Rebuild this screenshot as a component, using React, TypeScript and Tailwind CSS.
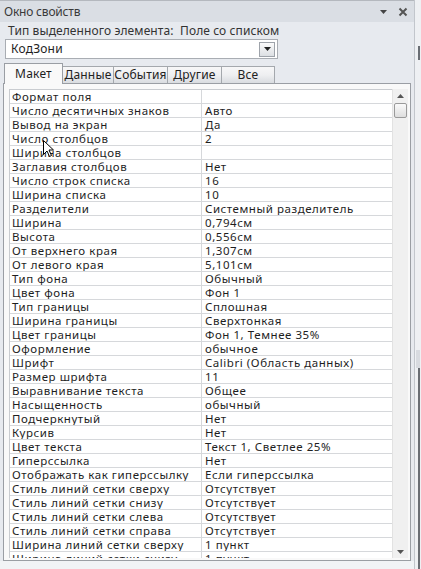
import React from 'react';

const rows: [string, string][] = [
  ['Формат поля', ''],
  ['Число десятичных знаков', 'Авто'],
  ['Вывод на экран', 'Да'],
  ['Число столбцов', '2'],
  ['Ширина столбцов', ''],
  ['Заглавия столбцов', 'Нет'],
  ['Число строк списка', '16'],
  ['Ширина списка', '10'],
  ['Разделители', 'Системный разделитель'],
  ['Ширина', '0,794см'],
  ['Высота', '0,556см'],
  ['От верхнего края', '1,307см'],
  ['От левого края', '5,101см'],
  ['Тип фона', 'Обычный'],
  ['Цвет фона', 'Фон 1'],
  ['Тип границы', 'Сплошная'],
  ['Ширина границы', 'Сверхтонкая'],
  ['Цвет границы', 'Фон 1, Темнее 35%'],
  ['Оформление', 'обычное'],
  ['Шрифт', 'Calibri (Область данных)'],
  ['Размер шрифта', '11'],
  ['Выравнивание текста', 'Общее'],
  ['Насыщенность', 'обычный'],
  ['Подчеркнутый', 'Нет'],
  ['Курсив', 'Нет'],
  ['Цвет текста', 'Текст 1, Светлее 25%'],
  ['Гиперссылка', 'Нет'],
  ['Отображать как гиперссылку', 'Если гиперссылка'],
  ['Стиль линий сетки сверху', 'Отсутствует'],
  ['Стиль линий сетки снизу', 'Отсутствует'],
  ['Стиль линий сетки слева', 'Отсутствует'],
  ['Стиль линий сетки справа', 'Отсутствует'],
  ['Ширина линий сетки сверху', '1 пункт'],
  ['Ширина линий сетки снизу', '1 пункт'],
];

const tabs = ['Макет', 'Данные', 'События', 'Другие', 'Все'];
const tabWidths = ['w-[59px]', 'w-[51px]', 'w-[54px]', 'w-[54px]', 'w-[53px]'];

export default function App() {
  return (
    <div className="w-[421px] h-[569px] flex bg-[#f1f3f6] overflow-hidden text-[#1e1e1e] font-['Noto_Sans',sans-serif] relative">
      <div className="w-[414px] h-[561px] flex flex-col bg-[#e7eaef] border-t border-[#b4b8be]">
        {/* title bar */}
        <div className="h-[21px] bg-[#dadee4] flex items-center justify-between pl-[4px] pr-[6px]">
          <span className="text-[12px] text-[#3a3a3a] tracking-[-0.2px]">Окно свойств</span>
          <div className="flex items-center gap-[10px]">
            <svg width="9" height="6" viewBox="0 0 9 6"><path d="M1 1h7L4.5 5z" fill="#444" /></svg>
            <svg width="10" height="10" viewBox="0 0 10 10"><path d="M1.5 1.5l7 7M8.5 1.5l-7 7" stroke="#555" strokeWidth="2" /></svg>
          </div>
        </div>

        <div className="pl-[8px] pt-[1px] h-[16px] text-[12px] leading-[16px] tracking-[0.1px] text-[#333]">
          Тип выделенного элемента:&nbsp;&nbsp;Поле со списком
        </div>

        {/* combo box */}
        <div className="ml-[5px] mt-[1px] w-[273px] h-[20px] bg-white border border-[#a9adb3] flex items-center justify-between pl-[5px] pr-[2px]">
          <span className="text-[12px] tracking-[0.2px]">КодЗони</span>
          <div className="w-[16px] h-[15px] border border-[#9ea3aa] bg-gradient-to-b from-[#fbfbfb] to-[#dcdfe3] flex items-center justify-center">
            <svg width="7" height="4" viewBox="0 0 7 4"><path d="M0 0h7L3.5 4z" fill="#222" /></svg>
          </div>
        </div>

        {/* tabs */}
        <div className="flex items-end ml-[4px] mt-[4px] h-[20px]">
          {tabs.map((t, i) =>
            i === 0 ? (
              <div key={t} className={`${tabWidths[i]} h-[21px] -mb-px relative z-10 bg-[#f9f9f9] border border-b-0 border-[#9a9ea4] flex items-start justify-center pt-[1px] text-[12px] tracking-[0.2px]`}>
                {t}
              </div>
            ) : (
              <div key={t} className={`${tabWidths[i]} h-[17px] bg-gradient-to-b from-[#f7f7f8] via-[#eeeff1] to-[#d9dce0] border border-l-0 border-b-0 border-[#a4a8ad] flex items-center justify-center text-[12px] tracking-[0.2px] text-[#222]`}>
                {t}
              </div>
            )
          )}
        </div>

        {/* panel */}
        <div className="ml-[3px] w-[408px] flex-1 bg-[#f9f9f9] border border-[#9a9ea4] pl-[5px] pt-[5px] pr-[2px] pb-[2px] flex overflow-hidden">
          <div className="flex-1 bg-white border-t border-l border-[#c9ccd0] overflow-hidden">
            {rows.map(([name, value]) => (
              <div key={name} className="flex h-[14px] border-b border-[#d6d8db] text-[11.5px] leading-[13px] tracking-[0.55px]">
                <div className="w-[192px] pl-[2px] border-r border-[#d6d8db] whitespace-nowrap overflow-hidden">{name}</div>
                <div className="flex-1 pl-[3px] whitespace-nowrap overflow-hidden">{value}</div>
              </div>
            ))}
          </div>
          {/* scrollbar */}
          <div className="w-[16px] bg-[#f0f0f0] border-l border-[#e2e2e2] flex flex-col items-center">
            <div className="h-[14px] flex items-center justify-center">
              <svg width="7" height="4" viewBox="0 0 7 4"><path d="M0 4h7L3.5 0z" fill="#555" /></svg>
            </div>
            <div className="w-[13px] h-[15px] rounded-[2px] border border-[#9a9a9a] bg-gradient-to-b from-[#fafafa] to-[#dedede]" />
            <div className="flex-1" />
            <div className="h-[12px] flex items-center justify-center">
              <svg width="7" height="4" viewBox="0 0 7 4"><path d="M0 0h7L3.5 4z" fill="#555" /></svg>
            </div>
          </div>
        </div>
      </div>

      {/* right edge strip */}
      <div className="w-[7px] flex flex-col bg-[#eef0f3] border-l border-[#c2c6cc]">
        <div className="h-[46px]" />
        <div className="h-[14px] w-[2px] ml-[3px] bg-[#6a6e74]" />
        <div className="h-[290px]" />
        <div className="h-[18px] w-[4px] ml-[1px] bg-[#d8dbe0]" />
        <div className="flex-1 w-[2px] ml-[3px] bg-[#6a6e74]" />
      </div>

      {/* mouse cursor */}
      <svg className="absolute left-[43px] top-[140px]" width="11" height="17" viewBox="0 0 11 17">
        <path d="M0.5 0.5v14l3.5-3.5 2.5 5.5 2-1-2.5-5.5h4.5z" fill="#fff" stroke="#000" strokeWidth="1" />
      </svg>
    </div>
  );
}
